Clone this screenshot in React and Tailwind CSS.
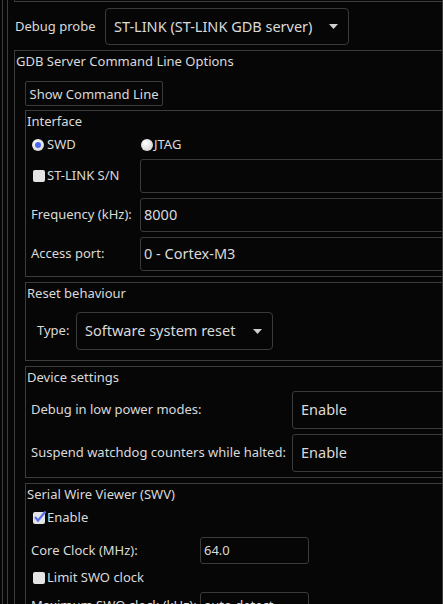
import React from "react";

const Arrow = () => (
  <svg width="9" height="5" viewBox="0 0 9 5" className="shrink-0">
    <path d="M0 0 L9 0 L4.5 5 Z" fill="#d0d0d0" />
  </svg>
);

const Check = ({ checked = false }) => (
  <span className="relative block w-[12px] h-[12px] rounded-[2px] bg-[#e4e4e4] shrink-0">
    {checked && (
      <svg width="14" height="13" viewBox="0 0 14 13" className="absolute left-[0px] top-[-2px]">
        <path d="M2 7 L5 10.5 L12.5 1.5" stroke="#5a6ff0" strokeWidth="2.2" fill="none" />
      </svg>
    )}
  </span>
);

const Radio = ({ checked = false }) => (
  <span className="flex items-center justify-center w-[12px] h-[12px] rounded-full bg-[radial-gradient(circle_at_40%_35%,#ffffff,#c8c8c8)] shrink-0">
    {checked && <span className="block w-[6px] h-[6px] rounded-full bg-[#4a68f2]" />}
  </span>
);

const Group = ({ title, className = "", children }) => (
  <div className={"border-l border-t border-b border-[#3c3c3c] " + className}>
    <div className="pl-[1px] leading-[20px]">{title}</div>
    {children}
  </div>
);

const Field = ({ value, className = "" }) => (
  <div className={"flex items-center pl-[3px] border border-[#3a3a3a] rounded-[3px] " + className}>
    {value}
  </div>
);

export default function App() {
  return (
    <div
      className="w-[443px] h-[604px] overflow-hidden bg-[#060606] text-[#dadada] text-[13px] border-r border-[#3c3c3c]"
      style={{ fontFamily: '"Noto Sans", "Open Sans", sans-serif' }}
    >
      <div className="ml-[2px] pl-[4px] h-full border-l border-[#3c3c3c]">
        <div className="h-full w-[640px] border-l border-[#3c3c3c]">
          {/* stub of the box above */}
          <div className="ml-[6px] h-[2px] border-l border-b border-[#3c3c3c]" />

          {/* Debug probe */}
          <div className="mt-[6px] flex items-center pl-[7px]">
            <span className="w-[90px]">Debug probe</span>
            <div className="w-[244px] h-[37px] flex items-center justify-between pl-[8px] pr-[10px] border border-[#3a3a3a] rounded-[4px] text-[14.5px]">
              <span>ST-LINK (ST-LINK GDB server)</span>
              <Arrow />
            </div>
          </div>

          {/* GDB Server Command Line Options */}
          <div className="mt-[5px] ml-[6px] border-l border-t border-[#3c3c3c]">
            <div className="pl-[1px] leading-[20px]">GDB Server Command Line Options</div>
            <button className="mt-[10px] ml-[10px] h-[25px] w-[138px] border border-[#3a3a3a] rounded-[2px] text-[13px] leading-[20px] text-[#dadada] text-center">
              Show Command Line
            </button>

            {/* Interface */}
            <Group title="Interface" className="mt-[4px] ml-[10px]">
              <div className="h-[28px] flex items-center">
                <div className="w-[115px] flex items-center pl-[6px] gap-[3px]">
                  <Radio checked />
                  <span>SWD</span>
                </div>
                <div className="flex items-center gap-[1px]">
                  <Radio />
                  <span>JTAG</span>
                </div>
              </div>
              <div className="flex items-center">
                <div className="w-[114px] flex items-center pl-[7px] gap-[2px]">
                  <Check />
                  <span>ST-LINK S/N</span>
                </div>
                <Field value="" className="flex-1 h-[34px]" />
              </div>
              <div className="mt-[5px] flex items-center">
                <span className="w-[114px] pl-[5px]">Frequency (kHz):</span>
                <Field value="8000" className="flex-1 h-[34px] text-[14.5px]" />
              </div>
              <div className="mt-[5px] mb-[5px] flex items-center">
                <span className="w-[114px] pl-[5px]">Access port:</span>
                <Field value="0 - Cortex-M3" className="flex-1 h-[34px] text-[14.5px]" />
              </div>
            </Group>

            {/* Reset behaviour */}
            <Group title="Reset behaviour" className="mt-[5px] ml-[10px]">
              <div className="mt-[9px] mb-[10px] flex items-center pl-[11px]">
                <span className="w-[39px]">Type:</span>
                <div className="w-[197px] h-[38px] flex items-center justify-between pl-[8px] pr-[10px] border border-[#3a3a3a] rounded-[4px] text-[14.5px]">
                  <span>Software system reset</span>
                  <Arrow />
                </div>
              </div>
            </Group>

            {/* Device settings */}
            <Group title="Device settings" className="mt-[5px] ml-[10px]">
              <div className="mt-[4px] flex items-center">
                <span className="w-[266px] pl-[5px]">Debug in low power modes:</span>
                <Field value="Enable" className="flex-1 h-[38px] pl-[8px] text-[14.5px]" />
              </div>
              <div className="mt-[5px] mb-[5px] flex items-center">
                <span className="w-[266px] pl-[5px]">Suspend watchdog counters while halted:</span>
                <Field value="Enable" className="flex-1 h-[38px] pl-[8px] text-[14.5px]" />
              </div>
            </Group>

            {/* Serial Wire Viewer */}
            <Group title="Serial Wire Viewer (SWV)" className="mt-[5px] ml-[10px]">
              <div className="h-[28px] flex items-center pl-[7px] gap-[2px]">
                <Check checked />
                <span>Enable</span>
              </div>
              <div className="mt-[5px] flex items-center">
                <span className="w-[174px] pl-[5px]">Core Clock (MHz):</span>
                <Field value="64.0" className="w-[109px] h-[27px]" />
              </div>
              <div className="h-[28px] flex items-center pl-[7px] gap-[2px]">
                <Check />
                <span>Limit SWO clock</span>
              </div>
              <div className="flex items-center">
                <span className="w-[174px] pl-[5px]">Maximum SWO clock (kHz):</span>
                <Field value="auto detect" className="w-[109px] h-[27px]" />
              </div>
            </Group>
          </div>
        </div>
      </div>
    </div>
  );
}
